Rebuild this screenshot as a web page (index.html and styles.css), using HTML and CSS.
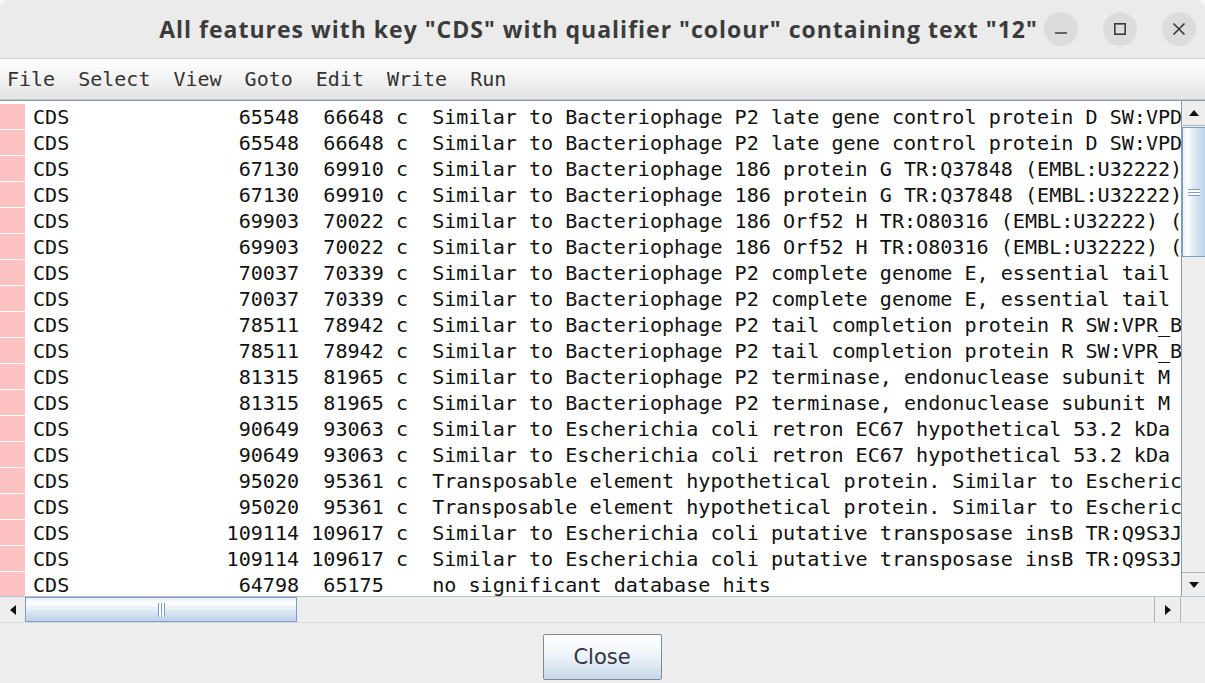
FILE: index.html
```html
<!DOCTYPE html>
<html lang="en">
<head>
<meta charset="utf-8">
<title>All features</title>
<link rel="stylesheet" href="styles.css">
</head>
<body>
<div class="window">
  <header class="titlebar">
    <div class="spacer"></div>
    <h1 class="title">All features with key "CDS" with qualifier "colour" containing text "12"</h1>
    <div class="controls">
      <span class="ctl"><svg width="14" height="14" viewBox="0 0 14 14"><line x1="1" y1="11" x2="13" y2="11" stroke="#3a3a3a" stroke-width="1.6"/></svg></span>
      <span class="ctl"><svg width="14" height="14" viewBox="0 0 14 14"><rect x="1.8" y="1.8" width="10.4" height="10.4" fill="none" stroke="#3a3a3a" stroke-width="1.6"/></svg></span>
      <span class="ctl"><svg width="14" height="14" viewBox="0 0 14 14"><path d="M1.5 1.5 L12.5 12.5 M12.5 1.5 L1.5 12.5" stroke="#3a3a3a" stroke-width="1.7"/></svg></span>
    </div>
  </header>

  <nav class="menubar">
    <span class="menu">File</span>
    <span class="menu">Select</span>
    <span class="menu">View</span>
    <span class="menu">Goto</span>
    <span class="menu">Edit</span>
    <span class="menu">Write</span>
    <span class="menu">Run</span>
  </nav>

  <div class="scrollpane">
    <div class="main">
      <div class="viewport">
        <div class="row"><span class="swatch"></span><span class="key">CDS</span><span class="num">65548</span><span class="num end">66648</span><span class="strand">c</span><span class="desc">Similar to Bacteriophage P2 late gene control protein D SW:VPD_BPP2 (P25479) (162 aa)</span></div>
        <div class="row"><span class="swatch"></span><span class="key">CDS</span><span class="num">65548</span><span class="num end">66648</span><span class="strand">c</span><span class="desc">Similar to Bacteriophage P2 late gene control protein D SW:VPD_BPP2 (P25479) (162 aa)</span></div>
        <div class="row"><span class="swatch"></span><span class="key">CDS</span><span class="num">67130</span><span class="num end">69910</span><span class="strand">c</span><span class="desc">Similar to Bacteriophage 186 protein G TR:Q37848 (EMBL:U32222) (815 aa)</span></div>
        <div class="row"><span class="swatch"></span><span class="key">CDS</span><span class="num">67130</span><span class="num end">69910</span><span class="strand">c</span><span class="desc">Similar to Bacteriophage 186 protein G TR:Q37848 (EMBL:U32222) (815 aa)</span></div>
        <div class="row"><span class="swatch"></span><span class="key">CDS</span><span class="num">69903</span><span class="num end">70022</span><span class="strand">c</span><span class="desc">Similar to Bacteriophage 186 Orf52 H TR:O80316 (EMBL:U32222) (39 aa)</span></div>
        <div class="row"><span class="swatch"></span><span class="key">CDS</span><span class="num">69903</span><span class="num end">70022</span><span class="strand">c</span><span class="desc">Similar to Bacteriophage 186 Orf52 H TR:O80316 (EMBL:U32222) (39 aa)</span></div>
        <div class="row"><span class="swatch"></span><span class="key">CDS</span><span class="num">70037</span><span class="num end">70339</span><span class="strand">c</span><span class="desc">Similar to Bacteriophage P2 complete genome E, essential tail protein</span></div>
        <div class="row"><span class="swatch"></span><span class="key">CDS</span><span class="num">70037</span><span class="num end">70339</span><span class="strand">c</span><span class="desc">Similar to Bacteriophage P2 complete genome E, essential tail protein</span></div>
        <div class="row"><span class="swatch"></span><span class="key">CDS</span><span class="num">78511</span><span class="num end">78942</span><span class="strand">c</span><span class="desc">Similar to Bacteriophage P2 tail completion protein R SW:VPR_BPP2 (P36932)</span></div>
        <div class="row"><span class="swatch"></span><span class="key">CDS</span><span class="num">78511</span><span class="num end">78942</span><span class="strand">c</span><span class="desc">Similar to Bacteriophage P2 tail completion protein R SW:VPR_BPP2 (P36932)</span></div>
        <div class="row"><span class="swatch"></span><span class="key">CDS</span><span class="num">81315</span><span class="num end">81965</span><span class="strand">c</span><span class="desc">Similar to Bacteriophage P2 terminase, endonuclease subunit M SW:TERM_BPP2</span></div>
        <div class="row"><span class="swatch"></span><span class="key">CDS</span><span class="num">81315</span><span class="num end">81965</span><span class="strand">c</span><span class="desc">Similar to Bacteriophage P2 terminase, endonuclease subunit M SW:TERM_BPP2</span></div>
        <div class="row"><span class="swatch"></span><span class="key">CDS</span><span class="num">90649</span><span class="num end">93063</span><span class="strand">c</span><span class="desc">Similar to Escherichia coli retron EC67 hypothetical 53.2 kDa protein</span></div>
        <div class="row"><span class="swatch"></span><span class="key">CDS</span><span class="num">90649</span><span class="num end">93063</span><span class="strand">c</span><span class="desc">Similar to Escherichia coli retron EC67 hypothetical 53.2 kDa protein</span></div>
        <div class="row"><span class="swatch"></span><span class="key">CDS</span><span class="num">95020</span><span class="num end">95361</span><span class="strand">c</span><span class="desc">Transposable element hypothetical protein. Similar to Escherichia coli</span></div>
        <div class="row"><span class="swatch"></span><span class="key">CDS</span><span class="num">95020</span><span class="num end">95361</span><span class="strand">c</span><span class="desc">Transposable element hypothetical protein. Similar to Escherichia coli</span></div>
        <div class="row"><span class="swatch"></span><span class="key">CDS</span><span class="num">109114</span><span class="num end">109617</span><span class="strand">c</span><span class="desc">Similar to Escherichia coli putative transposase insB TR:Q9S3J1 (EMBL</span></div>
        <div class="row"><span class="swatch"></span><span class="key">CDS</span><span class="num">109114</span><span class="num end">109617</span><span class="strand">c</span><span class="desc">Similar to Escherichia coli putative transposase insB TR:Q9S3J1 (EMBL</span></div>
        <div class="row"><span class="swatch"></span><span class="key">CDS</span><span class="num">64798</span><span class="num end">65175</span><span class="strand"></span><span class="desc">no significant database hits</span></div>
      </div>
      <div class="vscroll">
        <div class="arrow-btn up"><svg width="10" height="6" viewBox="0 0 10 6"><polygon points="0,6 10,6 5,0" fill="#111"/></svg></div>
        <div class="vthumb"><span class="vgrip"></span></div>
        <div class="vtrack"></div>
        <div class="arrow-btn down"><svg width="10" height="6" viewBox="0 0 10 6"><polygon points="0,0 10,0 5,6" fill="#111"/></svg></div>
      </div>
    </div>
    <div class="hbar">
      <div class="arrow-btn left"><svg width="6" height="10" viewBox="0 0 6 10"><polygon points="6,0 6,10 0,5" fill="#111"/></svg></div>
      <div class="hthumb"><span class="hgrip"></span></div>
      <div class="htrack"></div>
      <div class="arrow-btn right"><svg width="6" height="10" viewBox="0 0 6 10"><polygon points="0,0 0,10 6,5" fill="#111"/></svg></div>
      <div class="corner"></div>
    </div>
  </div>

  <footer class="buttons">
    <button class="btn">Close</button>
  </footer>
</div>
</body>
</html>
```

FILE: styles.css
```css
html, body {
  margin: 0;
  padding: 0;
  background: #f6f6f6;
}

.window {
  width: 1205px;
  height: 683px;
  display: flex;
  flex-direction: column;
  overflow: hidden;
  background: #eeeeee;
  border-radius: 9px 9px 0 0;
}

/* ---------- title bar ---------- */
.titlebar {
  height: 58px;
  flex: none;
  display: grid;
  grid-template-columns: 1fr auto 1fr;
  align-items: center;
  background: #ebebeb;
  border-bottom: 1px solid #d2d2d2;
}

.title {
  margin: 0;
  font-family: "Open Sans", "DejaVu Sans", sans-serif;
  font-weight: 700;
  font-size: 23px;
  letter-spacing: 1px;
  color: #3b3b3b;
  white-space: nowrap;
  padding-top: 0;
  position: relative;
  left: -4px;
}

.controls {
  display: flex;
  justify-content: flex-end;
  gap: 25px;
  padding-right: 9px;
  padding-bottom: 1px;
}

.ctl {
  width: 34px;
  height: 34px;
  border-radius: 50%;
  background: #dcdcdc;
  display: flex;
  align-items: center;
  justify-content: center;
}

/* ---------- menu bar ---------- */
.menubar {
  height: 41px;
  flex: none;
  display: flex;
  align-items: center;
  padding-left: 7px;
  gap: 23px;
  background: linear-gradient(to bottom, #ffffff 0%, #f4f4f4 45%, #e3e3e3 100%);
  border-bottom: 1px solid #c8c8c8;
  box-sizing: border-box;
  font-family: "DejaVu Sans Mono", monospace;
  font-size: 20px;
  color: #333333;
}

.menu {
  line-height: 24px;
}

/* ---------- scroll pane ---------- */
.scrollpane {
  flex: none;
  display: flex;
  flex-direction: column;
  border-top: 1px solid #8a9aad;
  height: 522px;
  box-sizing: border-box;
}

.main {
  display: flex;
  height: 495px;
}

.viewport {
  flex: 1;
  overflow: hidden;
  background: #ffffff;
  padding-top: 3px;
  font-family: "DejaVu Sans Mono", monospace;
  font-size: 20.1px;
  color: #111111;
}

.row {
  display: flex;
  height: 26px;
  line-height: 26px;
  white-space: pre;
}

.swatch {
  flex: none;
  width: 25px;
  height: 25px;
  background: #ffc2c2;
}

.key {
  flex: none;
  width: 16ch;
  padding-left: 8px;
}

.num {
  flex: none;
  width: 6ch;
  text-align: right;
}

.end {
  margin-left: 1ch;
}

.strand {
  flex: none;
  width: 1ch;
  margin-left: 1ch;
}

.desc {
  margin-left: 2ch;
}

/* vertical scrollbar */
.vscroll {
  flex: none;
  width: 23px;
  border-left: 1px solid #8a9aad;
  display: flex;
  flex-direction: column;
  background: #eeeeee;
}

.arrow-btn {
  flex: none;
  display: flex;
  align-items: center;
  justify-content: center;
  background: #eeeeee;
  box-sizing: border-box;
}

.up {
  height: 25px;
  border-bottom: 1px solid #b4b4b4;
}

.down {
  height: 24px;
  border-top: 1px solid #b4b4b4;
}

.vthumb {
  flex: none;
  height: 130px;
  margin-top: 1px;
  box-sizing: border-box;
  border: 1px solid #7f9cc9;
  border-right: none;
  background: linear-gradient(to right, #e9f0f8 0%, #ffffff 22%, #d9e6f3 55%, #bcd2e8 100%);
  display: flex;
  align-items: center;
  justify-content: center;
}

.vgrip {
  width: 12px;
  height: 7px;
  background: linear-gradient(to bottom,
    #7f9cc9 0, #7f9cc9 1px, #ffffff 1px, #ffffff 3px,
    #7f9cc9 3px, #7f9cc9 4px, #ffffff 4px, #ffffff 6px,
    #7f9cc9 6px, #7f9cc9 7px);
}

.vtrack {
  flex: 1;
}

/* horizontal scrollbar */
.hbar {
  height: 26px;
  flex: none;
  display: flex;
  background: #eeeeee;
  border-top: 1px solid #b4c3d6;
  box-sizing: border-box;
}

.left {
  width: 25px;
}

.right {
  width: 27px;
  border-left: 1px solid #b4b4b4;
  border-right: 1px solid #b4b4b4;
}

.hthumb {
  flex: none;
  width: 272px;
  box-sizing: border-box;
  border: 1px solid #7f9cc9;
  background: linear-gradient(to bottom, #e9f0f8 0%, #ffffff 22%, #d9e6f3 60%, #bcd2e8 100%);
  display: flex;
  align-items: center;
  justify-content: center;
}

.hgrip {
  width: 7px;
  height: 14px;
  background: linear-gradient(to right,
    #7f9cc9 0, #7f9cc9 1px, #ffffff 1px, #ffffff 3px,
    #7f9cc9 3px, #7f9cc9 4px, #ffffff 4px, #ffffff 6px,
    #7f9cc9 6px, #7f9cc9 7px);
}

.htrack {
  flex: 1;
}

.corner {
  flex: none;
  width: 24px;
  background: #eeeeee;
}

/* ---------- bottom buttons ---------- */
.buttons {
  flex: 1;
  display: flex;
  justify-content: center;
  align-items: flex-start;
  padding-top: 11px;
  border-top: 1px solid #dadada;
  background: #eeeeee;
}

.btn {
  width: 119px;
  height: 46px;
  margin-left: -1px;
  border: 1px solid #7d8b9a;
  border-radius: 2px;
  background: linear-gradient(to bottom, #ffffff 0%, #f3f7fb 35%, #dfe9f4 70%, #c6d8ea 100%);
  font-family: "DejaVu Sans", sans-serif;
  font-size: 21px;
  color: #333344;
  padding: 0;
}
```
